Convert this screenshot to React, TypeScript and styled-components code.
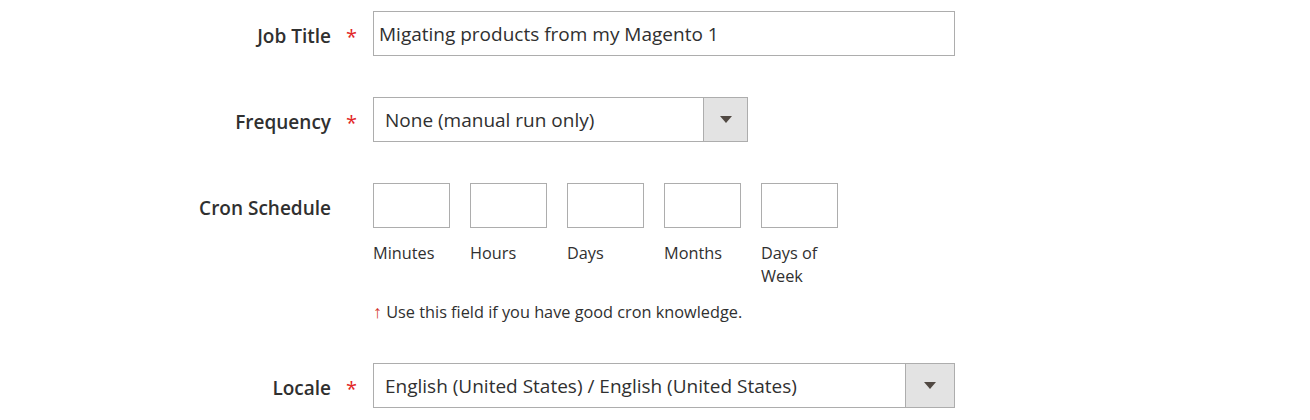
import styled, { createGlobalStyle } from 'styled-components';

const GlobalStyle = createGlobalStyle`
  body {
    margin: 0;
    background: #fff;
    font-family: 'Open Sans', 'Liberation Sans', sans-serif;
    color: #303030;
  }
`;

const cronFields = ['Minutes', 'Hours', 'Days', 'Months', 'Days of Week'];

function SelectArrow () {
  return (
    <svg width='12' height='7' viewBox='0 0 12 7'>
      <path d='M0 0h12L6 7z' fill='#514943' />
    </svg>
  );
}

export default function App () {
  return (
    <Form>
      <GlobalStyle />

      <Field>
        <Label>Job Title</Label>
        <Required>*</Required>
        <Control>
          <TextInput $width={582} defaultValue='Migating products from my Magento 1' />
        </Control>
      </Field>

      <Field>
        <Label>Frequency</Label>
        <Required>*</Required>
        <Control>
          <Select $width={375}>
            <SelectValue>None (manual run only)</SelectValue>
            <SelectButton $width={43}>
              <SelectArrow />
            </SelectButton>
          </Select>
        </Control>
      </Field>

      <Field>
        <Label>Cron Schedule</Label>
        <Required />
        <Control>
          <CronRow>
            {cronFields.map((name) => (
              <CronItem key={name}>
                <CronInput />
                <CronCaption>{name}</CronCaption>
              </CronItem>
            ))}
          </CronRow>
          <Note>
            <NoteArrow>↑</NoteArrow> Use this field if you have good cron knowledge.
          </Note>
        </Control>
      </Field>

      <Field>
        <Label>Locale</Label>
        <Required>*</Required>
        <Control>
          <Select $width={582}>
            <SelectValue>English (United States) / English (United States)</SelectValue>
            <SelectButton $width={48}>
              <SelectArrow />
            </SelectButton>
          </Select>
        </Control>
      </Field>
    </Form>
  );
}

const Form = styled.div`
  padding-top: 11px;
  width: 1310px;
  height: 420px;
  overflow: hidden;
  box-sizing: border-box;
`;

const Field = styled.div`
  display: grid;
  grid-template-columns: 331px 42px auto;
  align-items: start;
  margin-bottom: 41px;
`;

const Label = styled.div`
  text-align: right;
  font-size: 19px;
  font-weight: 600;
  line-height: 24px;
  padding-top: 13px;
`;

const Required = styled.div`
  color: #e22626;
  font-size: 20px;
  font-weight: 400;
  line-height: 24px;
  padding-top: 14px;
  padding-left: 15px;
`;

const Control = styled.div`
  display: flex;
  flex-direction: column;
`;

const TextInput = styled.input<{ $width: number }>`
  width: ${(p) => p.$width}px;
  height: 45px;
  box-sizing: border-box;
  border: 1px solid #adadad;
  padding: 0 5px;
  font-family: inherit;
  font-size: 19px;
  color: #303030;
  outline: none;
`;

const Select = styled.div<{ $width: number }>`
  width: ${(p) => p.$width}px;
  height: 45px;
  box-sizing: border-box;
  border: 1px solid #adadad;
  display: flex;
  align-items: stretch;
  background: #fff;
`;

const SelectValue = styled.div`
  flex: 1;
  display: flex;
  align-items: center;
  padding-left: 11px;
  font-size: 19px;
`;

const SelectButton = styled.div<{ $width: number }>`
  width: ${(p) => p.$width}px;
  background: #e3e3e3;
  border-left: 1px solid #adadad;
  display: flex;
  align-items: center;
  justify-content: center;
`;

const CronRow = styled.div`
  display: flex;
  gap: 20px;
`;

const CronItem = styled.div`
  width: 77px;
  display: flex;
  flex-direction: column;
`;

const CronInput = styled.input`
  width: 77px;
  height: 45px;
  box-sizing: border-box;
  border: 1px solid #adadad;
  outline: none;
`;

const CronCaption = styled.div`
  margin-top: 14px;
  font-size: 16.3px;
  line-height: 23px;
`;

const Note = styled.div`
  margin-top: 14px;
  font-size: 16.3px;
  line-height: 20px;
`;

const NoteArrow = styled.span`
  color: #d2342b;
  font-size: 18px;
  line-height: 1;
`;
